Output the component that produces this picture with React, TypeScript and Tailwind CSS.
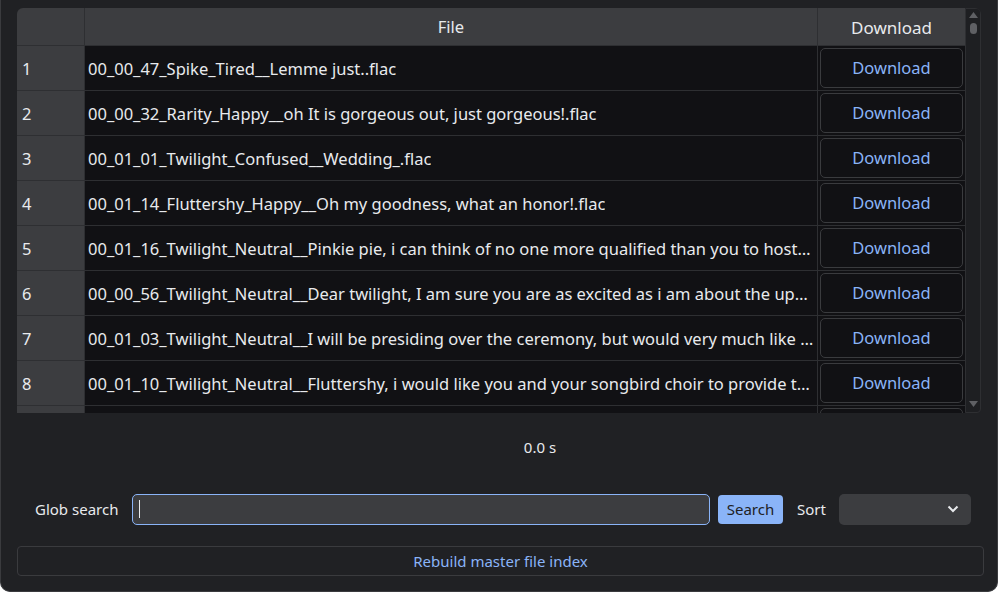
import React from "react";

const files = [
  "00_00_47_Spike_Tired__Lemme just..flac",
  "00_00_32_Rarity_Happy__oh It is gorgeous out, just gorgeous!.flac",
  "00_01_01_Twilight_Confused__Wedding_.flac",
  "00_01_14_Fluttershy_Happy__Oh my goodness, what an honor!.flac",
  "00_01_16_Twilight_Neutral__Pinkie pie, i can think of no one more qualified than you to host the reception.flac",
  "00_00_56_Twilight_Neutral__Dear twilight, I am sure you are as excited as i am about the upcoming wedding.flac",
  "00_01_03_Twilight_Neutral__I will be presiding over the ceremony, but would very much like your help.flac",
  "00_01_10_Twilight_Neutral__Fluttershy, i would like you and your songbird choir to provide the music.flac",
  "00_01_20_Twilight_Neutral__And rarity.flac",
];

const Row = ({ i, name }: { i: number; name: string }) => (
  <div className="flex h-[45px] shrink-0 border-b border-[#2e2f32]">
    <div className="w-[68px] shrink-0 bg-[#3c3d40] border-r border-[#2e2f32] flex items-center pl-[5px] pt-[2px]">
      {i + 1}
    </div>
    <div className="w-[733px] shrink-0 bg-[#111114] border-r border-[#2e2f32] flex items-center px-[3px] pt-[2px] min-w-0">
      <span className="truncate">{name}</span>
    </div>
    <div className="flex-1 bg-[#111114] p-[2px]">
      <button className="w-full h-full rounded-[5px] border border-[#3a3b3e] bg-[#111114] text-[#8ab4f8] pt-[1px]">
        Download
      </button>
    </div>
  </div>
);

export default function App() {
  return (
    <div
      className="w-[998px] h-[592px] bg-[#202124] text-[#e8eaed] border-x border-b border-[#3a3b3e] rounded-b-[10px] overflow-hidden px-[16px] pt-[8px]"
      style={{ fontFamily: '"Noto Sans", sans-serif' }}
    >
      <div className="flex h-[405px] rounded-t-[6px] overflow-hidden text-[16.5px]">
        <div className="w-[950px] flex flex-col overflow-hidden">
          <div className="flex h-[38px] shrink-0 bg-[#3c3d40] border-b border-[#2e2f32]">
            <div className="w-[68px] shrink-0 border-r border-[#2e2f32]" />
            <div className="w-[733px] shrink-0 border-r border-[#2e2f32] flex items-center justify-center pt-[2px]">
              File
            </div>
            <div className="flex-1 flex items-center justify-center pt-[2px] text-[17px]">Download</div>
          </div>
          {files.map((f, i) => (
            <Row key={i} i={i} name={f} />
          ))}
        </div>
        <div className="w-[16px] bg-[#1e1f22] border border-[#2e2f32] rounded-r-[4px] flex flex-col items-center pt-[3px]">
          <svg width="9" height="6" viewBox="0 0 9 6">
            <path d="M0 6 L4.5 0 L9 6 Z" fill="#5f6064" />
          </svg>
          <div className="w-[7px] h-[11px] rounded-full bg-[#5f6064] mt-[5px]" />
          <div className="flex-1" />
          <svg width="9" height="6" viewBox="0 0 9 6" className="mb-[5px]">
            <path d="M0 0 L4.5 6 L9 0 Z" fill="#5f6064" />
          </svg>
        </div>
      </div>

      <div className="h-[70px] flex items-center justify-center pl-[82px] pb-[2px] text-[15px]">0.0 s</div>

      <div className="flex items-center h-[32px] mt-[10px] text-[15px]">
        <span className="ml-[18px] w-[97px]">Glob search</span>
        <div className="w-[578px] h-[31px] rounded-[5px] border border-[#8ab4f8] bg-[#3c3d40] flex items-center pl-[6px]">
          <div className="w-px h-[18px] bg-[#e8eaed]" />
        </div>
        <button className="ml-[8px] w-[65px] h-[29px] rounded-[4px] bg-[#8ab4f8] text-[#202124]">Search</button>
        <span className="ml-[14px]">Sort</span>
        <div className="ml-[13px] w-[132px] h-[31px] rounded-[5px] bg-[#3c3d40] flex items-center justify-end pr-[12px]">
          <svg width="12" height="8" viewBox="0 0 12 8">
            <path d="M1.5 1.5 L6 6 L10.5 1.5" stroke="#e8eaed" strokeWidth="2" fill="none" />
          </svg>
        </div>
      </div>

      <button className="mt-[21px] w-[967px] h-[30px] rounded-[4px] border border-[#3a3b3e] text-[#8ab4f8] text-[15px] flex items-center justify-center">
        Rebuild master file index
      </button>
    </div>
  );
}
